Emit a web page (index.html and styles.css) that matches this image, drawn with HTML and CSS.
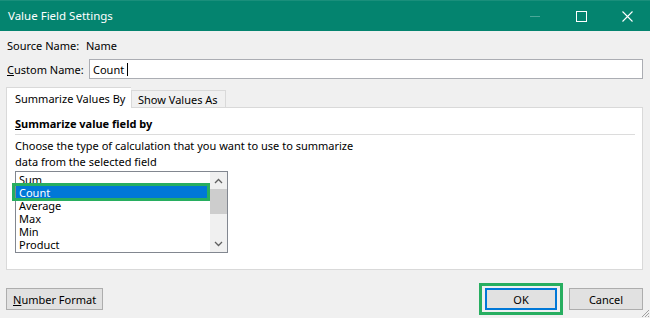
FILE: index.html
```html
<!DOCTYPE html>
<html lang="en">
<head>
    <meta charset="UTF-8">
    <meta name="viewport" content="width=device-width, initial-scale=1.0">
    <title>Value Field Settings</title>
    <link rel="stylesheet" href="styles.css">
</head>
<body>

<div class="window">
    <div class="titlebar">
        <span class="title">Value Field Settings</span>
        <div class="caption-buttons">
            <span class="cap-btn minimize"></span>
            <span class="cap-btn">
                <svg width="11" height="11" viewBox="0 0 11 11"><rect x="0.5" y="0.5" width="10" height="10" fill="none" stroke="#fff" stroke-width="1"/></svg>
            </span>
            <span class="cap-btn">
                <svg width="11" height="11" viewBox="0 0 11 11"><path d="M0.5 0.5 L10.5 10.5 M10.5 0.5 L0.5 10.5" stroke="#fff" stroke-width="1.1"/></svg>
            </span>
        </div>
    </div>

    <div class="content">
        <div class="row source-row">
            <span class="label">Source Name:</span>
            <span class="source-value">Name</span>
        </div>

        <div class="row custom-row">
            <span class="label"><u>C</u>ustom Name:</span>
            <div class="text-input">Count<span class="caret"></span></div>
        </div>

        <div class="tabs">
            <div class="tab active">Summarize Values By</div>
            <div class="tab">Show Values As</div>
        </div>

        <div class="panel">
            <div class="group-title"><u>S</u>ummarize value field by</div>
            <p class="hint">Choose the type of calculation that you want to use to summarize<br>data from the selected field</p>

            <div class="listbox">
                <ul class="items">
                    <li>Sum</li>
                    <li class="selected">Count</li>
                    <li>Average</li>
                    <li>Max</li>
                    <li>Min</li>
                    <li>Product</li>
                </ul>
                <div class="scrollbar">
                    <svg class="arrow" width="9" height="6" viewBox="0 0 9 6"><path d="M1 5 L4.5 1.5 L8 5" fill="none" stroke="#606060" stroke-width="1.3"/></svg>
                    <div class="track"><div class="thumb"></div></div>
                    <svg class="arrow" width="9" height="6" viewBox="0 0 9 6"><path d="M1 1 L4.5 4.5 L8 1" fill="none" stroke="#606060" stroke-width="1.3"/></svg>
                </div>
                <div class="highlight-box"></div>
            </div>
        </div>

        <div class="footer">
            <button class="btn number-btn"><u>N</u>umber Format</button>
            <div class="footer-right">
                <div class="ok-wrap">
                    <button class="btn default">OK</button>
                </div>
                <button class="btn cancel-btn">Cancel</button>
            </div>
        </div>
    </div>

    <svg class="grip" width="10" height="10" viewBox="0 0 10 10">
        <path d="M9 2 L2 9 M9 5 L5 9 M9 8 L8 9" stroke="#a0a0a0" stroke-width="1"/>
    </svg>
</div>

</body>
</html>
```

FILE: styles.css
```css
body {
    margin: 0;
    padding: 0;
    font-family: 'Noto Sans', 'Open Sans', sans-serif;
    font-size: 11px;
    color: #000;
    background-color: #f0f0f0;
}

.window {
    position: relative;
    width: 650px;
    height: 318px;
    background-color: #f0f0f0;
    overflow: hidden;
}

.titlebar {
    height: 31px;
    background-color: #04846f;
    border-top: 1px solid #1a8f7b;
    box-sizing: border-box;
    display: flex;
    align-items: center;
    justify-content: space-between;
    padding-left: 8px;
    color: #fff;
}

.title {
    font-size: 11.5px;
    margin-top: -1px;
}

.caption-buttons {
    display: flex;
    height: 100%;
}

.cap-btn {
    width: 46px;
    display: flex;
    align-items: center;
    justify-content: center;
}

.minimize::before {
    content: '';
    width: 10px;
    height: 1px;
    background-color: #4aa898;
}

.content {
    padding: 0 7px 0 6px;
}

.row {
    display: flex;
    align-items: center;
    white-space: nowrap;
}

.label {
    padding-left: 1px;
}

.source-row {
    margin-top: 6px;
    height: 16px;
}

.source-row .label {
    width: 79px;
}

.custom-row {
    margin-top: 6px;
    height: 20px;
}

.custom-row .label {
    width: 82px;
}

.text-input {
    flex: 1;
    height: 20px;
    box-sizing: border-box;
    border: 1px solid #abadb3;
    background-color: #fff;
    padding-left: 3px;
    display: flex;
    align-items: center;
}

.caret {
    display: inline-block;
    width: 1px;
    height: 13px;
    background-color: #000;
    margin-left: 3px;
}

.tabs {
    margin-top: 8px;
    display: flex;
    align-items: flex-end;
    height: 20px;
    white-space: nowrap;
}

.tab {
    height: 17px;
    box-sizing: border-box;
    padding: 0 6px;
    border: 1px solid #d9d9d9;
    border-bottom: none;
    background-color: #f0f0f0;
    display: flex;
    align-items: center;
}

.tab.active {
    width: 125px;
    height: 21px;
    margin-bottom: -1px;
    background-color: #fff;
    padding: 0 8px;
    position: relative;
    z-index: 1;
    border-right: none;
}

.tab:last-child {
    width: 95px;
}

.panel {
    height: 163px;
    box-sizing: border-box;
    background-color: #fff;
    border: 1px solid #d9d9d9;
    padding: 8px 7px 0 8px;
}

.group-title {
    font-weight: bold;
    line-height: 16px;
    padding-bottom: 2px;
    border-bottom: 1px solid #dcdcdc;
}

.hint {
    margin: 3px 0 0 0;
    line-height: 16px;
}

.listbox {
    position: relative;
    margin-top: 1px;
    width: 213px;
    height: 82px;
    box-sizing: border-box;
    border: 1px solid #828790;
    display: flex;
}

.items {
    list-style: none;
    margin: 0;
    padding: 1px 1px 0 0;
    flex: 1;
}

.items li {
    height: 13px;
    line-height: 13px;
    padding-left: 3px;
}

.items li.selected {
    background-color: #0078d7;
    color: #fff;
}

.scrollbar {
    width: 17px;
    background-color: #f0f0f0;
    display: flex;
    flex-direction: column;
    align-items: center;
}

.arrow {
    margin: 6px 0 5px;
}

.track {
    flex: 1;
    width: 100%;
}

.thumb {
    height: 25px;
    background-color: #cdcdcd;
}

.highlight-box {
    position: absolute;
    left: -4px;
    top: 11px;
    width: 198px;
    height: 18px;
    box-sizing: border-box;
    border: 3px solid #27ae60;
}

.footer {
    margin-top: 13px;
    display: flex;
    justify-content: space-between;
    align-items: center;
}

.btn {
    font-family: 'Noto Sans', 'Open Sans', sans-serif;
    font-size: 11px;
    height: 22px;
    box-sizing: border-box;
    border: 1px solid #adadad;
    background-color: #e1e1e1;
    color: #000;
    padding: 0 6px;
    white-space: nowrap;
    cursor: pointer;
}

.number-btn {
    width: 97px;
}

.footer-right {
    display: flex;
    align-items: center;
    gap: 6px;
}

.ok-wrap {
    border: 3px solid #27ae60;
    padding: 2px 3px;
    background-color: #f0f0f0;
}

.btn.default {
    width: 72px;
    border: 2px solid #0078d7;
}

.cancel-btn {
    width: 74px;
}

.grip {
    position: absolute;
    right: 0;
    bottom: 0;
}
```
